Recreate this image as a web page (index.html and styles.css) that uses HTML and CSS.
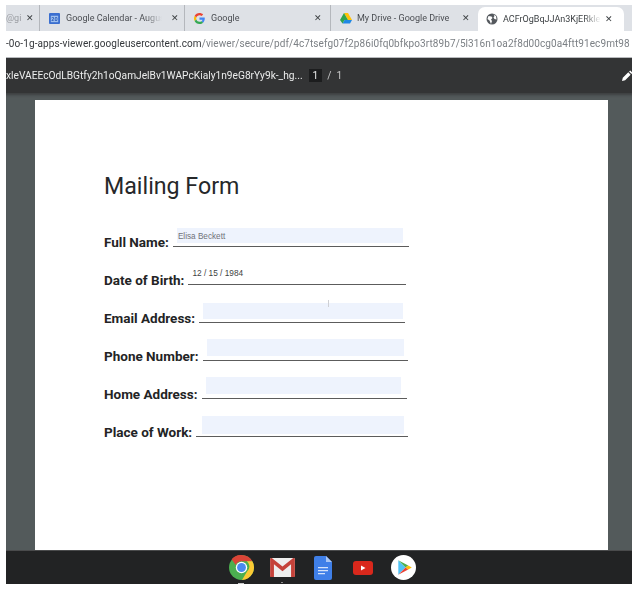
FILE: index.html
```html
<!DOCTYPE html>
<html lang="en">
<head>
<meta charset="utf-8">
<title>Mailing Form</title>
<link rel="stylesheet" href="styles.css">
</head>
<body>
<div class="window">
  <div class="tabs">
    <div class="tab tab-first"><span class="tab-title fade tt-first">@gi</span><span class="close">✕</span></div>
    <div class="tab tab-cal">
      <svg class="fav" viewBox="0 0 12 12"><rect width="12" height="12" rx="1" fill="#3b6fd0"/><rect x="2" y="3" width="8" height="7" fill="#9fc0ee"/><text x="6" y="9" class="cal-num">20</text></svg>
      <span class="tab-title fade tt-cal">Google Calendar - Augus</span><span class="close">✕</span>
    </div>
    <div class="tab tab-google">
      <svg class="fav" viewBox="0 0 48 48"><path fill="#ea4335" d="M24 9.500c3.500 0 6.700 1.300 9.100 3.500l6.800-6.800C35.800 2.400 30.200 0 24 0 14.600 0 6.500 5.400 2.600 13.200l7.900 6.200C12.400 13.600 17.700 9.500 24 9.500z"/><path fill="#4285f4" d="M47 24.500c0-1.600-.2-3.100-.4-4.500H24v9h13c-.6 3-2.300 5.500-4.800 7.200l7.700 6C44.400 38 47 31.800 47 24.500z"/><path fill="#fbbc05" d="M10.500 28.600c-.5-1.400-.8-3-.8-4.600s.3-3.200.8-4.600l-7.900-6.200C.9 16.500 0 20.100 0 24s.9 7.500 2.600 10.800l7.900-6.200z"/><path fill="#34a853" d="M24 48c6.500 0 11.900-2.100 15.900-5.800l-7.700-6c-2.200 1.400-4.900 2.300-8.200 2.300-6.300 0-11.600-4.100-13.500-9.900l-7.900 6.200C6.500 42.600 14.600 48 24 48z"/></svg>
      <span class="tab-title tt-google">Google</span><span class="close">✕</span>
    </div>
    <div class="tab tab-drive">
      <svg class="fav" viewBox="0 0 24 22"><path fill="#ffc107" d="M8 0h8l8 14h-8z"/><path fill="#1e88e5" d="M5 21l4-7h15l-4 7z"/><path fill="#2ea44f" d="M8 0l8 14-7 0-4 7-5-7z"/></svg>
      <span class="tab-title tt-drive">My Drive - Google Drive</span><span class="close">✕</span>
    </div>
    <div class="tab tab-active">
      <svg class="fav" viewBox="0 0 24 24"><circle cx="12" cy="12" r="11" fill="#55595e"/><path fill="#fff" d="M5 6l6 1 2 3-3 3 2 3-2 6-3-7-4-3zM15 3l5 3 1 7-4-1-2-3 2-3z"/></svg>
      <span class="tab-title fade tt-active">ACFrOgBqJJAn3KjERkle</span><span class="close close-dark">✕</span>
    </div>
  </div>
  <div class="address"><span class="url"><b>-0o-1g-apps-viewer.googleusercontent.com</b>/viewer/secure/pdf/4c7tsefg07f2p86i0fq0bfkpo3rt89b7/5l316n1oa2f8d00cg0a4ftt91ec9mt98</span></div>
  <div class="gap"></div>
  <div class="toolbar">
    <span class="doc-name">xleVAEEcOdLBGtfy2h1oQamJelBv1WAPcKialy1n9eG8rYy9k-_hg...</span>
    <span class="page-box">1</span>
    <span class="page-total">/ &nbsp;1</span>
    <svg class="pencil" viewBox="0 0 14 14"><path fill="#fff" d="M0 14l1-4 7-7 3 3-7 7zM9 2l1.500-1.500 3 3L12 5z"/></svg>
  </div>
  <div class="viewer">
    <div class="page">
      <h1 class="title">Mailing Form</h1>
      <div class="row row-name"><span class="label">Full Name:</span><span class="line"><span class="fill fill-name"><span class="val">Elisa Beckett</span></span></span></div>
      <div class="row row-dob"><span class="label">Date of Birth:</span><span class="line"><span class="val val-dob">12 / 15 / 1984</span></span></div>
      <div class="row row-email"><span class="label">Email Address:</span><span class="line"><span class="fill fill-email"></span></span></div>
      <div class="row row-phone"><span class="label">Phone Number:</span><span class="line"><span class="fill fill-phone"></span></span></div>
      <div class="row row-home"><span class="label">Home Address:</span><span class="line"><span class="fill fill-home"></span></span></div>
      <div class="row row-work"><span class="label">Place of Work:</span><span class="line"><span class="fill fill-work"></span></span></div>
    </div>
  </div>
  <div class="shelf">
    <span class="slot slot-chrome"><svg class="app" viewBox="0 0 48 48"><circle cx="24" cy="24" r="24" fill="#4caf50"/><path fill="#db4437" d="M24 0a24 24 0 0 1 20.800 12H24a12 12 0 0 0-11 7L5 8A24 24 0 0 1 24 0z"/><path fill="#fcc934" d="M44.800 12A24 24 0 0 1 25 48l10-17a12 12 0 0 0-1-19z"/><circle cx="24" cy="24" r="11" fill="#fff"/><circle cx="24" cy="24" r="8.500" fill="#4a8af0"/></svg></span>
    <span class="slot slot-mail"><svg class="app app-mail" viewBox="0 0 26 20"><rect width="26" height="20" rx="1.500" fill="#eeeeee"/><path fill="#c5423a" d="M0 1.500C0 .5.800 0 1.700 0L13 9 24.300 0c.9 0 1.700.5 1.700 1.500V20h-4V6.500L13 14 4 6.500V20H0z"/></svg></span>
    <svg class="app app-doc" viewBox="0 0 18 24"><path fill="#3f7fe8" d="M2 0h10l6 6v16a2 2 0 0 1-2 2H2a2 2 0 0 1-2-2V2a2 2 0 0 1 2-2z"/><path fill="#a9c6f5" d="M12 0l6 6h-6z"/><path fill="#d5e3fa" d="M4 11h10v1.300H4zM4 14h10v1.300H4zM4 17h7v1.300H4z"/></svg>
    <svg class="app app-yt" viewBox="0 0 20 14"><rect width="20" height="14" rx="3" fill="#d9281c"/><path fill="#fff" d="M8 4.500l4.500 2.500L8 9.500z"/></svg>
    <svg class="app app-play" viewBox="0 0 48 48"><circle cx="24" cy="24" r="24" fill="#fff"/><path fill="#4fc3f7" d="M14 10v28l14-14z"/><path fill="#4caf50" d="M14 10l19 10-5 4z"/><path fill="#ea4335" d="M14 38l19-10-5-4z"/><path fill="#fbbc05" d="M33 20l7 4-7 4-5-4z"/></svg>
  </div>
</div>
</body>
</html>
```
FILE: styles.css
```css
html, body { margin: 0; padding: 0; background: #fff; }
body { width: 636px; height: 590px; overflow: hidden; font-family: Roboto, "Liberation Sans", sans-serif; }
.window { width: 626px; margin: 5px 0 0 6px; display: flex; flex-direction: column; height: 579px; overflow: hidden; filter: blur(.4px); }

.tabs { height: 26px; background: #dee1e6; display: flex; align-items: stretch; flex: none; }
.tab { display: flex; align-items: center; box-sizing: border-box; font-size: 9px; color: #4a4d52; position: relative; }
.tab-first { width: 34px; border-right: 1px solid #b4b7bc; }
.tab-cal { width: 145px; border-right: 1px solid #b4b7bc; padding-left: 9px; }
.tab-google { width: 146px; border-right: 1px solid #b4b7bc; padding-left: 9px; }
.tab-drive { width: 147px; padding-left: 9px; }
.tab-active { width: 146px; margin-top: 2px; background: #fff; border-radius: 7px 7px 0 0; padding-left: 8px; }
.fav { width: 11px; height: 11px; flex: none; margin-right: 6px; }
.tab-drive .fav { width: 12px; margin-right: 5px; }
.tab-active .fav { width: 12px; height: 12px; margin-right: 5px; }
.cal-num { font: bold 6px Roboto, sans-serif; fill: #2b5cb8; text-anchor: middle; }
.tab-title { display: block; white-space: nowrap; }
.fade { -webkit-mask-image: linear-gradient(to right, #000 82%, transparent); mask-image: linear-gradient(to right, #000 82%, transparent); }
.tt-first { width: 18px; margin-right: 2px; color: #9a9da2; }
.tt-cal { width: 96px; margin-right: 9px; }
.tt-google { width: 103px; }
.tt-drive { width: 100px; margin-right: 5px; }
.tt-active { width: 98px; margin-right: 4px; color: #3c4043; }
.close { font-size: 9px; line-height: 1; color: #3c4043; font-family: "DejaVu Sans", sans-serif; font-weight: bold; }

.address { height: 20px; margin-top: 2px; background: #fff; overflow: hidden; display: flex; align-items: center; flex: none; }
.url { font-size: 10px; white-space: nowrap; color: #7c8085; letter-spacing: .09px; }
.url b { font-weight: 400; color: #34373b; }
.gap { height: 5px; background: #fff; border-bottom: 1px solid #b8babd; box-sizing: border-box; flex: none; }

.toolbar { height: 35px; background: #333435; display: flex; align-items: center; color: #eceded; font-size: 10.2px; overflow: hidden; flex: none; }
.doc-name { white-space: nowrap; }
.page-box { background: #1c1d1e; padding: 1px 4px; margin-left: 6px; margin-right: 5px; }
.page-total { color: #c7c8c8; }
.pencil { width: 11px; height: 11px; margin-left: auto; flex: none; margin-right: -1px; }

.viewer { flex: 1; min-height: 0; background: #535a5b; padding: 7px 24px 0 29px; box-sizing: border-box; box-shadow: inset 0 4px 3px -2px #3d3f40; }
.page { background: #fff; height: 100%; padding: 68px 0 0 69px; box-sizing: border-box; color: #232425; }
.title { margin: 0 0 8px; font-weight: 400; font-size: 23.2px; line-height: 36px; color: #26282a; }
.row { display: flex; align-items: flex-end; height: 38px; font-size: 13.5px; font-weight: 700; box-sizing: border-box; }
.label { line-height: 18px; white-space: nowrap; margin-right: 4px; position: relative; top: 1px; }
.line { position: relative; display: block; height: 0; border-bottom: 1.5px solid #5c5c5c; margin-bottom: 3px; }
.row-name { width: 305px; } .row-dob { width: 302px; } .row-email { width: 301px; }
.row-phone { width: 304px; } .row-home { width: 303px; } .row-work { width: 304px; }
.row .line { flex: 1; }
.fill { position: absolute; bottom: 3px; background: #eef3fd; display: block; }
.fill-name { left: 4px; right: 6px; height: 15px; }
.fill-email { left: 4px; right: 2px; height: 16px; }
.fill-email::after { content: ""; position: absolute; left: 125px; top: -3px; width: 1px; height: 7px; background: #cfd0d4; }
.fill-phone { left: 4px; right: 4px; height: 17px; bottom: 4px; }
.fill-home { left: 4px; right: 6px; height: 17px; bottom: 4px; }
.fill-work { left: 6px; right: 4px; height: 18px; bottom: 2px; }
.val { position: absolute; left: 1px; top: 4px; font-size: 8.2px; font-weight: 400; font-family: "Liberation Sans", sans-serif; color: #70727a; white-space: nowrap; line-height: 9px; }
.val-dob { left: 4px; top: auto; bottom: 6px; color: #3e3f42; font-size: 8.3px; }

.shelf { height: 34px; background: #222324; border-top: 1px solid #4a4b4c; box-sizing: border-box; display: flex; align-items: center; justify-content: center; flex: none; padding-left: 6px; }
.slot { position: relative; display: flex; flex: none; }
.slot::after { content: ""; position: absolute; bottom: -4px; left: 50%; height: 1px; background: #c9c9c9; }
.slot-chrome::after { width: 6px; margin-left: -3px; }
.slot-mail::after { width: 2px; margin-left: -1px; bottom: -6px; background: #8a8a8a; }
.app { width: 25px; height: 25px; flex: none; display: block; }
.slot-mail { margin-left: 16px; }
.app-mail { width: 25px; height: 19px; }
.app-doc { width: 18px; height: 24px; margin-left: 19px; }
.app-yt { width: 20px; height: 14px; margin-left: 21px; }
.app-play { width: 25px; height: 25px; margin-left: 18px; }
```
